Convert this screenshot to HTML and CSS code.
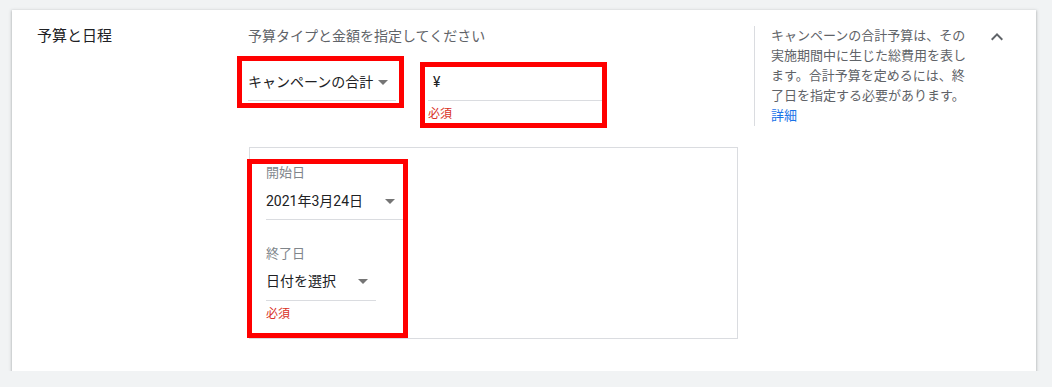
FILE: index.html
```html
<!DOCTYPE html>
<html lang="ja">
<head>
  <meta charset="UTF-8">
  <meta name="viewport" content="width=device-width, initial-scale=1.0">
  <title>予算と日程</title>
  <link rel="stylesheet" href="styles.css">
</head>
<body>
  <div class="card">
    <!-- Section title -->
    <div class="label-col">
      <h2 class="section-title">予算と日程</h2>
    </div>

    <!-- Budget + schedule fields -->
    <div class="main-col">
      <p class="hint">予算タイプと金額を指定してください</p>

      <div class="field-row">
        <div class="mark mark-type">
          <div class="select select-type">
            <span>キャンペーンの合計</span>
            <span class="arrow"></span>
          </div>
        </div>

        <div class="mark mark-amount">
          <div class="input-amount">¥</div>
          <div class="error">必須</div>
        </div>
      </div>

      <div class="date-panel">
        <div class="mark mark-dates">
          <div class="date-label">開始日</div>
          <div class="select select-start">
            <span>2021年3月24日</span>
            <span class="arrow"></span>
          </div>

          <div class="date-label date-label-end">終了日</div>
          <div class="select select-end">
            <span>日付を選択</span>
            <span class="arrow"></span>
          </div>
          <div class="error">必須</div>
        </div>
      </div>
    </div>

    <!-- Help text -->
    <div class="help-col">
      キャンペーンの合計予算は、その実施期間中に生じた総費用を表します。合計予算を定めるには、終了日を指定する必要があります。
      <a href="#" class="help-link">詳細</a>
    </div>

    <div class="collapse">
      <svg width="24" height="24" viewBox="0 0 24 24">
        <path d="M7.41 15.41L12 10.83l4.59 4.58L18 14l-6-6-6 6z" fill="#5f6368"/>
      </svg>
    </div>
  </div>
</body>
</html>
```

FILE: styles.css
```css
* {
  margin: 0;
  padding: 0;
  box-sizing: border-box;
}

body {
  background: #f1f3f4;
  padding: 10px 16px 0 12px;
  font-family: Roboto, "Noto Sans CJK JP", sans-serif;
  color: #202124;
}

/* Card */
.card {
  width: 1024px;
  background: #fff;
  display: flex;
  align-items: flex-start;
  padding: 16px 27px 32px 0;
  box-shadow: 0 1px 2px 0 rgba(60, 64, 67, 0.3), 0 1px 3px 1px rgba(60, 64, 67, 0.15);
}

.label-col {
  width: 236px;
  padding-left: 25px;
}

.section-title {
  font-size: 15px;
  font-weight: normal;
  line-height: 20px;
  color: #202124;
}

.main-col {
  width: 506px;
}

.hint {
  font-size: 14px;
  line-height: 20px;
  color: #5f6368;
}

/* Red annotation boxes */
.mark {
  border: 5px solid #ff0000;
}

.field-row {
  display: flex;
  align-items: flex-start;
  gap: 16px;
  margin-top: 10px;
  margin-left: -11px;
}

.mark-type {
  padding: 0 3px 2px 6px;
}

.mark-amount {
  margin-top: 6px;
  width: 187px;
  padding: 0 0 1px 3px;
}

/* Select-like fields */
.select {
  display: flex;
  align-items: center;
  justify-content: space-between;
  font-size: 14px;
  line-height: 20px;
  color: #202124;
  padding-right: 8px;
  border-bottom: 1px solid #dadce0;
}

.select-type {
  width: 148px;
  padding-top: 11px;
  padding-bottom: 8px;
}

.arrow {
  width: 0;
  height: 0;
  border-left: 5px solid transparent;
  border-right: 5px solid transparent;
  border-top: 5px solid #757575;
}

.input-amount {
  font-size: 14px;
  line-height: 20px;
  padding: 5px 0 8px 5px;
  border-bottom: 1px solid #dadce0;
}

.error {
  font-size: 12px;
  line-height: 16px;
  color: #d93025;
  margin-top: 5px;
}

/* Date panel */
.date-panel {
  width: 489px;
  margin: 19px 0 0 1px;
  border: 1px solid #dadce0;
}

.mark-dates {
  width: 161px;
  margin: 11px 0 0 -3px;
  padding: 1px 0 11px 14px;
}

.date-label {
  font-size: 13px;
  line-height: 16px;
  color: #80868b;
}

.date-label-end {
  margin-top: 26px;
}

.select-start {
  margin-top: 10px;
  padding-bottom: 8px;
}

.select-end {
  width: 110px;
  margin-top: 9px;
  padding-bottom: 9px;
}

/* Help */
.help-col {
  width: 217px;
  border-left: 1px solid #dadce0;
  padding-left: 16px;
  font-size: 13px;
  line-height: 20px;
  color: #5f6368;
}

.help-link {
  display: block;
  color: #1a73e8;
  text-decoration: none;
}

.collapse {
  margin-left: 14px;
  margin-top: -1px;
  height: 24px;
}
```
